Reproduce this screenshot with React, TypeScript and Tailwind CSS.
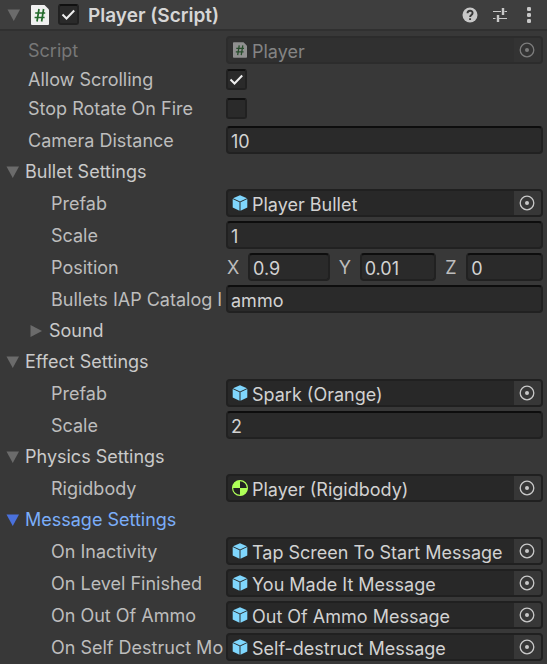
import { useState, type ReactNode } from "react";

function Arrow({ open, className }: { open: boolean; className: string }) {
  return (
    <svg viewBox="0 0 14 14" className={`size-3.5 shrink-0 ${className}`} fill="currentColor" aria-hidden="true">
      <path d={open ? "M0.5 1.5h12.5L6.75 13z" : "M.5 1v12L12 7z"} />
    </svg>
  );
}

function ScriptIcon({ className }: { className: string }) {
  return (
    <svg viewBox="0 0 18 20" className={`shrink-0 ${className}`} aria-hidden="true">
      <path d="M1 0h12.5L18 4.500V19a1 1 0 0 1-1 1H1a1 1 0 0 1-1-1V1a1 1 0 0 1 1-1z" fill="#f0f0f0" />
      <path d="M8 4L6 16.500M12.600 4l-2 12.500M4.200 8h10M3.600 12.500h10" stroke="#22692a" strokeWidth="1.700" fill="none" />
    </svg>
  );
}

function PrefabIcon() {
  return (
    <svg viewBox="0 0 16 16" className="size-4 shrink-0" aria-hidden="true">
      <path d="M8 .2L15 3.200 8 6.500 1 3.200z" fill="#7fd6fd" />
      <path d="M.7 4l6.800 3.200v8.600L.7 12.600z" fill="#7fd6fd" />
      <path d="M15.300 4L8.500 7.200v8.600l6.800-3.200z" fill="#7fd6fd" />
    </svg>
  );
}

function RigidbodyIcon() {
  return (
    <svg viewBox="0 0 16 16" className="size-4 shrink-0" aria-hidden="true">
      <circle cx="8" cy="8" r="7.4" fill="#222" stroke="#aeff58" strokeWidth="1.2" />
      <path d="M8 8V.5A7.500 7.500 0 0 0 .5 8zM8 8v7.500A7.500 7.500 0 0 0 15.500 8z" fill="#aeff58" />
    </svg>
  );
}

function Checkbox({ id, label, initial }: { id: string; label?: string; initial: boolean }) {
  const [checked, setChecked] = useState(initial);
  return (
    <span className="relative block size-[21px] shrink-0">
      <input
        id={id}
        type="checkbox"
        aria-label={label}
        checked={checked}
        onChange={(e) => setChecked(e.target.checked)}
        className="block size-full appearance-none rounded-[3px] border-2 border-[#212121] border-t-[#101010] bg-[#2a2a2a]"
      />
      {checked && (
        <svg viewBox="0 0 21 21" className="pointer-events-none absolute inset-0 size-full" aria-hidden="true">
          <path d="M4.500 10.500l4 4 7.700-8" fill="none" stroke="#eee" strokeWidth="2" />
        </svg>
      )}
    </span>
  );
}

function Row({ id, label, nested, dim, children }: { id?: string; label: string; nested?: boolean; dim?: boolean; children: ReactNode }) {
  return (
    <div className="flex h-7 items-center pr-1">
      <label
        htmlFor={id}
        className={`w-[226px] shrink-0 overflow-hidden whitespace-nowrap pr-0.5 pt-px ${nested ? "pl-[51px]" : "pl-7"} ${dim ? "text-[#777]" : "text-[#bdbdbd]"}`}
      >
        {label}
      </label>
      {children}
    </div>
  );
}

function ToggleRow({ id, label, initial }: { id: string; label: string; initial: boolean }) {
  return (
    <div className="flex h-[25px] items-start pt-px">
      <label htmlFor={id} className="w-[226px] shrink-0 pl-7 leading-[22px] text-[#bdbdbd]">
        {label}
      </label>
      <Checkbox id={id} initial={initial} />
    </div>
  );
}

function Field({ id, value }: { id: string; value: string }) {
  return (
    <input
      id={id}
      type="text"
      defaultValue={value}
      className="h-7 w-full min-w-0 flex-1 rounded-[4px] border-2 border-[#212121] border-t-[#0d0d0d] bg-[#2a2a2a] px-[3px] pt-0.5 text-[#d2d2d2] outline-none"
    />
  );
}

function ObjectField({ id, icon, value, disabled }: { id: string; icon: ReactNode; value: string; disabled?: boolean }) {
  return (
    <div
      className={`flex h-7 min-w-0 flex-1 items-center overflow-hidden rounded-[4px] border-2 pl-1 ${
        disabled ? "border-[#2c2c2c] bg-[#303030] text-[#848484]" : "border-[#202020] bg-[#282828] text-[#d2d2d2]"
      }`}
    >
      {icon}
      <span className="min-w-0 flex-1 overflow-hidden whitespace-nowrap pl-1 pt-[3px]">{value}</span>
      <button
        id={id}
        type="button"
        disabled={disabled}
        aria-label={`Select ${value}`}
        className={`flex h-full w-[27px] shrink-0 items-center justify-center pr-px ${disabled ? "bg-[#333] text-[#7c7c7c]" : "bg-[#373737] text-[#c8c8c8]"}`}
      >
        <svg viewBox="0 0 16 16" className="size-4" fill="none" aria-hidden="true">
          <circle cx="8" cy="8" r="6.800" stroke="currentColor" strokeWidth="1.300" />
          <circle cx="8" cy="8" r="2" fill="currentColor" />
        </svg>
      </button>
    </div>
  );
}

function Foldout({ label, open: initial = true, nested, active, children }: { label: string; open?: boolean; nested?: boolean; active?: boolean; children?: ReactNode }) {
  const [open, setOpen] = useState(initial);
  return (
    <>
      <button
        type="button"
        aria-expanded={open}
        onClick={() => setOpen(!open)}
        className={`flex h-[27px] items-center gap-[5px] text-left ${nested ? "pl-[30px]" : "pl-1.5"} ${active ? "text-[#7baefa]" : "text-[#cacaca]"}`}
      >
        <Arrow open={open} className={active ? "text-[#4a71dc]" : "text-[#6b6b6b]"} />
        <span>{label}</span>
      </button>
      {open && children}
    </>
  );
}

const axes = [
  { axis: "X", value: "0.9" },
  { axis: "Y", value: "0.01" },
  { axis: "Z", value: "0" },
];

const messages = [
  { label: "On Inactivity", value: "Tap Screen To Start Message" },
  { label: "On Level Finished", value: "You Made It Message" },
  { label: "On Out Of Ammo", value: "Out Of Ammo Message" },
  { label: "On Self Destruct Mo", value: "Self-destruct Message" },
];

export default function App() {
  return (
    <main className="min-h-screen bg-[#383838] font-[Inter,'Liberation_Sans',sans-serif] text-[18px] leading-6">
      <header className="flex h-[31px] items-center border-b-2 border-[#303030] bg-[#3e3e3e] pl-[7px] pr-[11px]">
        <Arrow open className="text-[#6b6b6b]" />
        <ScriptIcon className="ml-2.5 h-5 w-[18px]" />
        <span className="ml-[9px]">
          <Checkbox id="enabled" label="Player enabled" initial />
        </span>
        <h1 className="ml-[9px] flex-1 pt-0.5 text-[19px] font-semibold text-[#d6d6d6]">Player (Script)</h1>
        <div className="flex items-center gap-3.5 text-[#c8c8c8]">
          <button type="button" aria-label="Help">
            <svg viewBox="0 0 16 16" className="size-4" aria-hidden="true">
              <circle cx="8" cy="8" r="7.500" fill="currentColor" />
              <path d="M5.500 6.300C5.500 3 10.600 3 10.600 6c0 2-2.500 1.900-2.500 4M8.100 11.200v1.900" fill="none" stroke="#383838" strokeWidth="1.900" />
            </svg>
          </button>
          <button type="button" aria-label="Presets">
            <svg viewBox="0 0 16 16" className="size-4" fill="none" stroke="currentColor" aria-hidden="true">
              <path d="M1 4.500h8M12.500 4.500H15M1 11.500h2.500M7 11.500h8" strokeWidth="1.200" />
              <path d="M11 1v7M6 8v7" strokeWidth="2.400" />
            </svg>
          </button>
          <button type="button" aria-label="More options">
            <svg viewBox="0 0 14 16" className="h-4 w-3.5" fill="currentColor" aria-hidden="true">
              <rect x="5" y="0" width="4" height="4" rx="1.300" />
              <rect x="5" y="6" width="4" height="4" rx="1.300" />
              <rect x="5" y="12" width="4" height="4" rx="1.300" />
            </svg>
          </button>
        </div>
      </header>

      <section className="flex flex-col gap-1 pb-[3px] pt-[5px]">
        <Row id="script" label="Script" dim>
          <ObjectField id="script" icon={<ScriptIcon className="mx-px h-4 w-3.5 opacity-50" />} value="Player" disabled />
        </Row>
        <ToggleRow id="scrolling" label="Allow Scrolling" initial />
        <ToggleRow id="rotate" label="Stop Rotate On Fire" initial={false} />
        <Row id="camera" label="Camera Distance">
          <Field id="camera" value="10" />
        </Row>

        <Foldout label="Bullet Settings">
          <Row id="bullet-prefab" label="Prefab" nested>
            <ObjectField id="bullet-prefab" icon={<PrefabIcon />} value="Player Bullet" />
          </Row>
          <Row id="bullet-scale" label="Scale" nested>
            <Field id="bullet-scale" value="1" />
          </Row>
          <Row id="position-X" label="Position" nested>
            <div className="grid min-w-0 flex-1 grid-cols-[103fr_98fr_98fr] gap-2">
              {axes.map(({ axis, value }) => (
                <div key={axis} className="flex min-w-0 items-center">
                  <label htmlFor={`position-${axis}`} className="w-[22px] shrink-0 pl-px pt-px text-[#bdbdbd]">
                    {axis}
                  </label>
                  <Field id={`position-${axis}`} value={value} />
                </div>
              ))}
            </div>
          </Row>
          <Row id="catalog" label="Bullets IAP Catalog I" nested>
            <Field id="catalog" value="ammo" />
          </Row>
          <Foldout label="Sound" open={false} nested />
        </Foldout>

        <Foldout label="Effect Settings">
          <Row id="effect-prefab" label="Prefab" nested>
            <ObjectField id="effect-prefab" icon={<PrefabIcon />} value="Spark (Orange)" />
          </Row>
          <Row id="effect-scale" label="Scale" nested>
            <Field id="effect-scale" value="2" />
          </Row>
        </Foldout>

        <Foldout label="Physics Settings">
          <Row id="rigidbody" label="Rigidbody" nested>
            <ObjectField id="rigidbody" icon={<RigidbodyIcon />} value="Player (Rigidbody)" />
          </Row>
        </Foldout>

        <Foldout label="Message Settings" active>
          {messages.map(({ label, value }) => (
            <Row key={label} id={label} label={label} nested>
              <ObjectField id={label} icon={<PrefabIcon />} value={value} />
            </Row>
          ))}
        </Foldout>
      </section>
    </main>
  );
}
